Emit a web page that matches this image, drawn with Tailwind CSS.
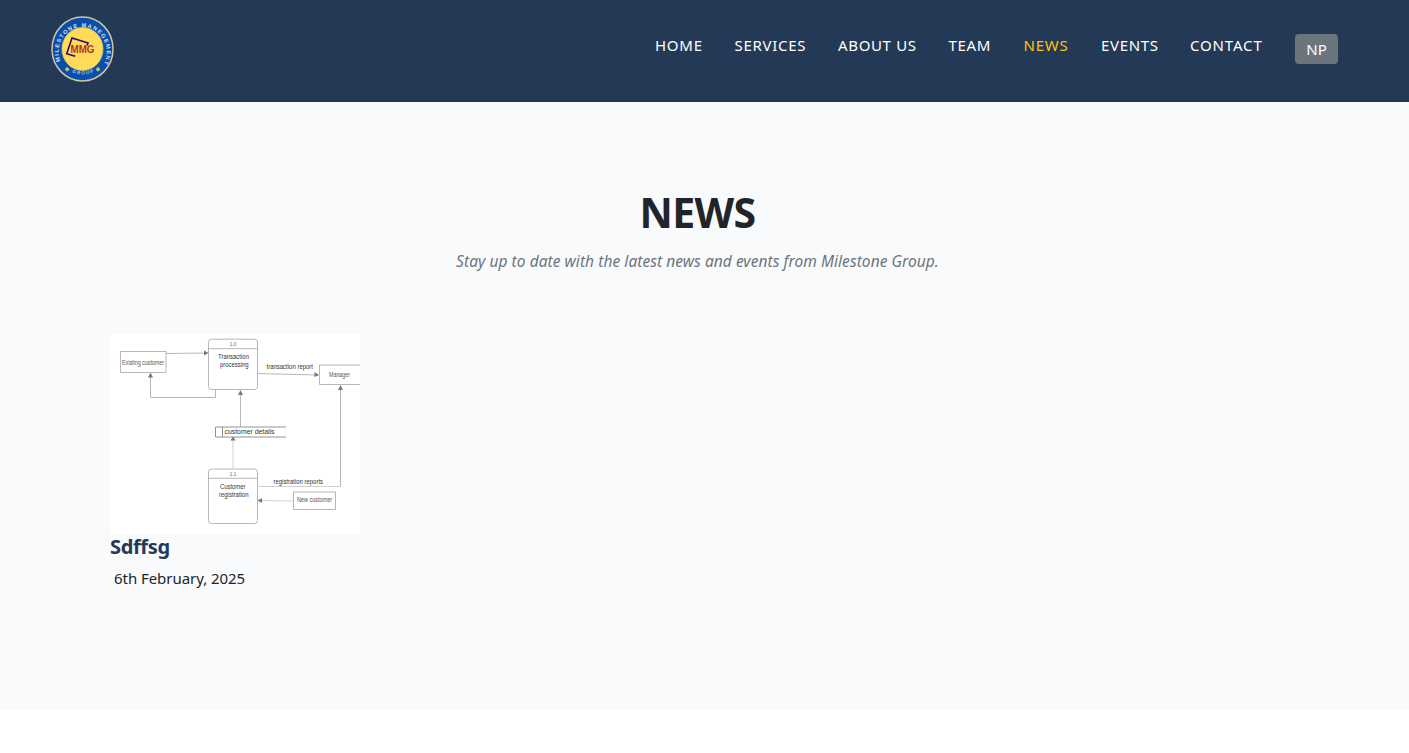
<!DOCTYPE html>
<html lang="en">
<head>
<meta charset="utf-8">
<title>News</title>
<script src="https://cdn.jsdelivr.net/npm/@tailwindcss/browser@4"></script>
</head>
<body class="bg-white font-['Noto_Sans',sans-serif] text-[#212529]">
<header class="flex h-[102px] items-start justify-between bg-[#243956] pl-[51px] pr-[71px]">
  <svg class="mt-4 h-[66px] w-[63px]" viewBox="0 0 63 66" preserveAspectRatio="none">
    <defs>
      <path id="top" d="M9.600 46 A24 25 0 1 1 53.400 46.500"/>
      <path id="bottom" d="M15 53 A28 28.500 0 0 0 48 53"/>
    </defs>
    <ellipse cx="31.500" cy="33" rx="30.500" ry="32" fill="#0b4dab" stroke="#cdc6a5" stroke-width="1.500"/>
    <ellipse cx="31.500" cy="33" rx="20.500" ry="21.500" fill="#ffdb58" stroke="#d8c46a" stroke-width=".8"/>
    <text font-family="Liberation Sans, sans-serif" font-size="5.600" font-weight="bold" fill="#d5e1f1"><textPath href="#top" textLength="98" startOffset="1">MILESTONE MANEGEMENT</textPath></text>
    <text font-family="Liberation Sans, sans-serif" font-size="4.600" font-weight="bold" fill="#b4cbe7"><textPath href="#bottom" startOffset="7" textLength="22">GROUP</textPath></text>
    <path d="M14.200 53.300h4M16.200 51.300v4M45 53.300h4M47 51.300v4" stroke="#d5c64b" stroke-width="1.800"/>
    <path d="M24.300 40.300 15.700 37.700 21 22 37 27 36 29.500" fill="none" stroke="#2b0a70" stroke-width="1.600"/>
    <text x="19.500" y="37" font-family="Liberation Sans, sans-serif" font-size="10" font-weight="bold" fill="#b5302c" textLength="24" lengthAdjust="spacingAndGlyphs">MMG</text>
  </svg>
  <nav class="flex items-start gap-8 whitespace-nowrap pt-[34px] text-[15px] leading-[23px] text-white">
    <a class="w-[47.500px] tracking-[0.75px]">HOME</a>
    <a class="w-[71.500px] tracking-[0.7px]">SERVICES</a>
    <a class="w-[78.500px] tracking-[0.65px]">ABOUT US</a>
    <a class="w-[43px] tracking-[0.7px]">TEAM</a>
    <a class="w-[45.500px] tracking-[0.8px] text-[#ffc107]">NEWS</a>
    <a class="w-[57px] tracking-[0.65px]">EVENTS</a>
    <a class="w-[73px] tracking-[0.85px]">CONTACT</a>
    <a class="flex h-[30px] w-[43px] items-center justify-center rounded bg-[#6c757d]">NP</a>
  </nav>
</header>
<main class="h-[608px] bg-[#f8fafc] px-[110px] pt-[85px]">
  <div class="-ml-[14px] flex flex-col items-center text-center">
    <h1 class="text-[41px] font-bold leading-[50px] tracking-[-0.6px]">NEWS</h1>
    <p class="mt-3 whitespace-nowrap text-[15.5px] italic leading-6 tracking-[0.055px] text-[#6c757d]">Stay up to date with the latest news and events from Milestone Group.</p>
  </div>
  <article class="mt-[61px] w-[250px]">
    <svg class="block h-[200px] w-[250px]" viewBox="0 0 250 200" font-family="Liberation Sans, sans-serif" font-size="6.500" fill="#333">
      <path d="M0 0h250v200H0z" fill="#fff"/>
      <g fill="none" stroke="#a4a4a4" stroke-width=".8">
        <path d="M10.500 17.500h45.500v21H10.500zM250 31H209.500v19.500H250M183.500 158h42v17.500h-42z"/>
        <rect x="98.500" y="5.200" width="49" height="50.300" rx="3"/>
        <rect x="98.500" y="135" width="49" height="54.500" rx="3"/>
        <path d="M98.500 14.700h49M98.500 144.300h49"/>
        <path d="M56 19.500 97 19M105.500 56v7.500h-65V40M147.500 39.500 208 41M130.500 93V57M230.500 152.500V52"/>
        <path d="M147.500 152.500h83M123 134v-31M183 167 149 166.500" stroke="#c4c4c4"/>
        <path d="M176 93h-70.500v10H176M112.500 93v10" stroke="#777"/>
      </g>
      <path d="M94 16.500v5l4.500-2.500zM38 43.500h5l-2.500-5zM204.500 38v5l4.500-2zM128 61h5l-2.500-5zM228 56h5l-2.500-5zM120.500 106.500h5l-2.500-4zM152 164v5l-4.500-2.500z" fill="#777"/>
      <text x="12" y="30.500" textLength="42" lengthAdjust="spacingAndGlyphs" fill="#555">Existing customer</text>
      <text x="119.500" y="12" font-size="5.500" textLength="7" fill="#777">1.0</text>
      <text x="108" y="25.200" font-size="7.200" textLength="31" lengthAdjust="spacingAndGlyphs">Transaction</text>
      <text x="110" y="33.200" font-size="7.200" textLength="28.500" lengthAdjust="spacingAndGlyphs">processing</text>
      <text x="156.500" y="35" font-size="7.200" textLength="46.500" lengthAdjust="spacingAndGlyphs">transaction report</text>
      <text x="219" y="43" textLength="21" lengthAdjust="spacingAndGlyphs" fill="#555">Manager</text>
      <text x="114.500" y="100" font-size="7.500" textLength="50" lengthAdjust="spacingAndGlyphs">customer details</text>
      <text x="119.500" y="142" font-size="5.500" textLength="7" fill="#777">1.1</text>
      <text x="110" y="155" font-size="7.200" textLength="25.500" lengthAdjust="spacingAndGlyphs">Customer</text>
      <text x="109" y="163.200" font-size="7.200" textLength="29.500" lengthAdjust="spacingAndGlyphs">registration</text>
      <text x="163.500" y="149.800" font-size="7.200" textLength="49.500" lengthAdjust="spacingAndGlyphs">registration reports</text>
      <text x="187" y="168.300" font-size="6.400" textLength="35" lengthAdjust="spacingAndGlyphs" fill="#555">New customer</text>
    </svg>
    <h2 class="text-[20px] font-bold leading-[26px] tracking-[-0.35px] text-[#243956]">Sdffsg</h2>
    <p class="mt-[6px] whitespace-nowrap pl-1 text-[15px] leading-6 tracking-[-0.05px]">6th February, 2025</p>
  </article>
</main>
</body>
</html>
